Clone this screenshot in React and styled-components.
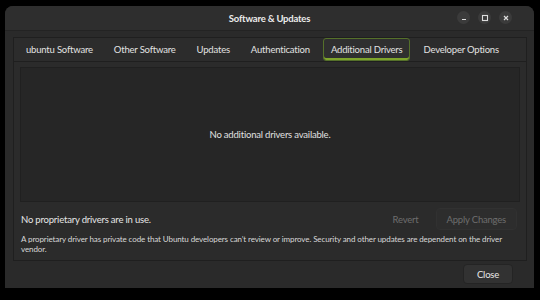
import React from 'react'
import { styled, createGlobalStyle } from 'styled-components'

const GlobalStyle = createGlobalStyle`
  html, body {
    margin: 0;
    padding: 0;
    background: #000;
  }
  body {
    width: 540px;
    height: 300px;
    overflow: hidden;
    font-family: Lato, "Noto Sans", "DejaVu Sans", sans-serif;
    letter-spacing: -0.2px;
  }
`;

const tabs = [
  'ubuntu Software',
  'Other Software',
  'Updates',
  'Authentication',
  'Additional Drivers',
  'Developer Options',
];

function App() {
  return (
    <>
      <GlobalStyle />
      <Screen>
        <Window>
          <TitleBar>
            <Title>Software &amp; Updates</Title>
            <Controls>
              <CtrlButton aria-label="minimize">
                <svg width="8" height="8" viewBox="0 0 8 8">
                  <path d="M2 5.5h4" stroke="#dcdcdc" strokeWidth="1.2" />
                </svg>
              </CtrlButton>
              <CtrlButton aria-label="maximize">
                <svg width="8" height="8" viewBox="0 0 8 8">
                  <rect x="1.5" y="1.5" width="5" height="5" fill="none" stroke="#dcdcdc" strokeWidth="1.1" />
                </svg>
              </CtrlButton>
              <CtrlButton aria-label="close">
                <svg width="8" height="8" viewBox="0 0 8 8">
                  <path d="M2 2l4 4M6 2l-4 4" stroke="#dcdcdc" strokeWidth="1.2" />
                </svg>
              </CtrlButton>
            </Controls>
          </TitleBar>

          <Body>
            <Notebook>
              <TabBar>
                {tabs.map((t) => (
                  <Tab key={t} $active={t === 'Additional Drivers'}>{t}</Tab>
                ))}
              </TabBar>
              <Page>
                <DriverList>No additional drivers available.</DriverList>
                <StatusRow>
                  <StatusText>No proprietary drivers are in use.</StatusText>
                  <Actions>
                    <FlatButton disabled>Revert</FlatButton>
                    <FlatButton disabled $framed>Apply Changes</FlatButton>
                  </Actions>
                </StatusRow>
                <Note>
                  A proprietary driver has private code that Ubuntu developers can’t review or improve. Security and other updates are dependent on the driver vendor.
                </Note>
              </Page>
            </Notebook>
            <Footer>
              <CloseButton>Close</CloseButton>
            </Footer>
          </Body>
        </Window>
      </Screen>
    </>
  )
}

export default App;

const Screen = styled.div`
  width: 540px;
  height: 300px;
  padding: 6px 6px 12px 5px;
  box-sizing: border-box;
  background: #000;
`;

const Window = styled.div`
  height: 100%;
  display: flex;
  flex-direction: column;
  background: #2a2a2a;
  border-radius: 8px 8px 0 0;
  overflow: hidden;
  color: #e8e8e8;
`;

const TitleBar = styled.div`
  position: relative;
  height: 24px;
  flex: none;
  display: flex;
  align-items: center;
  justify-content: center;
  background: #2e2e2e;
  border-bottom: 1px solid #232323;
`;

const Title = styled.div`
  font-size: 9.5px;
  font-weight: 700;
  color: #ececec;
`;

const Controls = styled.div`
  position: absolute;
  right: 22px;
  top: 5px;
  display: flex;
  gap: 8px;
`;

const CtrlButton = styled.div`
  width: 13px;
  height: 13px;
  border-radius: 50%;
  background: #3b3b3b;
  display: flex;
  align-items: center;
  justify-content: center;
`;

const Body = styled.div`
  flex: 1;
  display: flex;
  flex-direction: column;
  padding: 6px 7px 4px 8px;
`;

const Notebook = styled.div`
  display: flex;
  flex-direction: column;
  height: 222px;
  border: 1px solid #1f1f1f;
  background: #2b2b2b;
`;

const TabBar = styled.div`
  display: flex;
  gap: 6px;
  padding: 0 4px;
  height: 23px;
  background: #2c2c2c;
  border-bottom: 1px solid #1f1f1f;
`;

const Tab = styled.div`
  padding: 0 6px 0 7px;
  display: flex;
  align-items: center;
  font-size: 9.5px;
  color: #e2e2e2;
  border-radius: 3px;
  border: 1px solid ${(p) => (p.$active ? '#55702a' : 'transparent')};
  box-shadow: ${(p) => (p.$active ? 'inset 0 -2px 0 #7fa52c' : 'none')};
  background: ${(p) => (p.$active ? '#2f2f2f' : 'transparent')};
  white-space: nowrap;
`;

const Page = styled.div`
  flex: 1;
  display: flex;
  flex-direction: column;
  padding: 5px 6px 6px;
`;

const DriverList = styled.div`
  height: 133px;
  display: flex;
  align-items: center;
  justify-content: center;
  background: #262626;
  border: 1px solid #202020;
  font-size: 9.5px;
  color: #e0e0e0;
`;

const StatusRow = styled.div`
  display: flex;
  align-items: center;
  justify-content: space-between;
  margin-top: 6px;
  padding: 0 3px 0 1px;
`;

const StatusText = styled.div`
  font-size: 9.5px;
  color: #e6e6e6;
`;

const Actions = styled.div`
  display: flex;
  gap: 6px;
`;

const FlatButton = styled.button`
  height: 22px;
  padding: 0 10px;
  font-family: inherit;
  letter-spacing: inherit;
  font-size: 9.5px;
  color: #6e6e6e;
  background: ${(p) => (p.$framed ? '#2d2d2d' : 'transparent')};
  border: 1px solid ${(p) => (p.$framed ? '#313131' : 'transparent')};
  border-radius: 4px;
`;

const Note = styled.div`
  margin-top: 4px;
  padding-left: 1px;
  font-size: 8px;
  line-height: 10px;
  letter-spacing: -0.1px;
  color: #d8d8d8;
`;

const Footer = styled.div`
  display: flex;
  justify-content: flex-end;
  padding-top: 3px;
  padding-right: 14px;
`;

const CloseButton = styled.button`
  width: 50px;
  height: 20px;
  font-family: inherit;
  letter-spacing: inherit;
  font-size: 9.5px;
  color: #e8e8e8;
  background: #323232;
  border: 1px solid #242424;
  border-radius: 4px;
`;
